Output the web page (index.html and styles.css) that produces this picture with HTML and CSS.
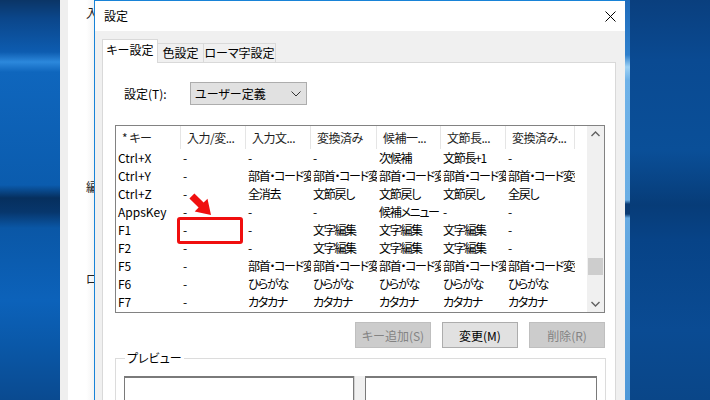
FILE: index.html
```html
<!DOCTYPE html>
<html lang="ja">
<head>
    <meta charset="UTF-8">
    <title>設定</title>
    <link rel="stylesheet" href="styles.css">
</head>
<body>
    <!-- desktop on the left -->
    <div class="desk desk-left"></div>

    <!-- window behind the dialog -->
    <div class="back-window">
        <span class="back-char ch1">入</span>
        <span class="back-char ch2">編</span>
        <span class="back-char ch3">ロ</span>
    </div>

    <!-- Settings dialog -->
    <div class="dialog">
        <div class="title-bar">
            <span class="title">設定</span>
            <svg class="close-x" width="11" height="11" viewBox="0 0 11 11">
                <path d="M0.5 0.5 L10.5 10.5 M10.5 0.5 L0.5 10.5" stroke="#000" stroke-width="1" fill="none"/>
            </svg>
        </div>

        <div class="dialog-body">
            <div class="tabs">
                <div class="tab active">キー設定</div>
                <div class="tab tab-color">色設定</div>
                <div class="tab tab-roma">ローマ字設定</div>
            </div>

            <div class="panel">
                <div class="setting-row">
                    <span class="setting-label">設定(T):</span>
                    <div class="combo">
                        <span>ユーザー定義</span>
                        <svg class="combo-arrow" width="10" height="6" viewBox="0 0 10 6">
                            <path d="M0.5 0.5 L5 5 L9.5 0.5" stroke="#333" stroke-width="1" fill="none"/>
                        </svg>
                    </div>
                </div>

                <div class="list">
                    <div class="list-main">
                        <div class="list-row list-head">
                            <div class="cell">* キー</div>
                            <div class="cell">入力/変...</div>
                            <div class="cell">入力文...</div>
                            <div class="cell">変換済み</div>
                            <div class="cell">候補一...</div>
                            <div class="cell">文節長...</div>
                            <div class="cell">変換済み...</div>
                            <div class="cell filler"></div>
                        </div>
                        <div id="rows"></div>
                    </div>
                    <div class="scrollbar">
                        <svg class="sb-arrow" width="17" height="17" viewBox="0 0 17 17">
                            <path d="M4.5 10 L8.5 6 L12.5 10" stroke="#606060" stroke-width="1.4" fill="none"/>
                        </svg>
                        <div class="sb-track">
                            <div class="sb-thumb"></div>
                        </div>
                        <svg class="sb-arrow" width="17" height="17" viewBox="0 0 17 17">
                            <path d="M4.5 7 L8.5 11 L12.5 7" stroke="#606060" stroke-width="1.4" fill="none"/>
                        </svg>
                    </div>
                </div>

                <div class="button-row">
                    <button class="win-btn" disabled>キー追加(S)</button>
                    <button class="win-btn">変更(M)</button>
                    <button class="win-btn" disabled>削除(R)</button>
                </div>

                <fieldset class="preview">
                    <legend>プレビュー</legend>
                    <div class="preview-boxes">
                        <div class="preview-box"></div>
                        <div class="splitter"></div>
                        <div class="preview-box wide"></div>
                    </div>
                </fieldset>
            </div>
        </div>
    </div>

    <!-- desktop on the right -->
    <div class="desk desk-right">
        <div class="light-edge"></div>
    </div>

    <!-- annotation -->
    <svg class="mark-arrow" width="30" height="30" viewBox="185 188 30 30">
        <polygon points="194.4,193.4 203.6,202.6 207.5,198.7 211,215 194.7,211.5 198.6,207.6 189.4,198.4" fill="#f00f0f"/>
    </svg>
    <div class="mark-box"></div>

    <script>
        const keyRows = [
            ['Ctrl+X', '-', '-', '-', '次候補', '文節長+1', '-'],
            ['Ctrl+Y', '-', '部首・コード変換', '部首・コード変換', '部首・コード変換', '部首・コード変換', '部首・コード変換'],
            ['Ctrl+Z', '-', '全消去', '文節戻し', '文節戻し', '文節戻し', '全戻し'],
            ['AppsKey', '-', '-', '-', '候補メニュー', '-', '-'],
            ['F1', '-', '-', '文字編集', '文字編集', '文字編集', '-'],
            ['F2', '-', '-', '文字編集', '文字編集', '文字編集', '-'],
            ['F5', '-', '部首・コード変換', '部首・コード変換', '部首・コード変換', '部首・コード変換', '部首・コード変換'],
            ['F6', '-', 'ひらがな', 'ひらがな', 'ひらがな', 'ひらがな', 'ひらがな'],
            ['F7', '-', 'カタカナ', 'カタカナ', 'カタカナ', 'カタカナ', 'カタカナ']
        ];

        const rowsEl = document.getElementById('rows');
        keyRows.forEach(function(r) {
            const row = document.createElement('div');
            row.className = 'list-row';
            r.forEach(function(text) {
                const c = document.createElement('div');
                c.className = 'cell';
                c.textContent = text;
                row.appendChild(c);
            });
            const f = document.createElement('div');
            f.className = 'cell filler';
            row.appendChild(f);
            rowsEl.appendChild(row);
        });
    </script>
</body>
</html>
```

FILE: styles.css
```css
* {
    margin: 0;
    padding: 0;
    box-sizing: border-box;
}

body {
    width: 710px;
    height: 400px;
    overflow: hidden;
    display: flex;
    position: relative;
    font-family: "Noto Sans CJK JP", "Noto Sans", sans-serif;
    font-feature-settings: "palt";
    font-size: 12px;
    color: #000;
    background: #0a4a90;
}

/* Desktop */
.desk {
    height: 400px;
    flex-shrink: 0;
}

.desk-left {
    width: 60px;
    background: linear-gradient(to bottom,
        #0b3566 0px, #0b468a 18px, #0d5cb0 52px, #2c88dc 62px, #0f66bd 72px,
        #0b5cae 185px, #062f5e 198px, #07366c 212px, #0a57a6 228px,
        #0c62ba 300px, #0a58a8 345px, #0a4a90 400px);
}

.desk-right {
    flex: 1;
    display: flex;
    background: linear-gradient(to bottom,
        #0a3f7e 0px, #0a4a92 60px, #0a4f98 150px, #073c78 205px,
        #074387 240px, #0a4b93 330px, #0a4688 400px);
}

.light-edge {
    width: 5px;
    background: linear-gradient(to bottom,
        #1f6cbc 0px, #2f80cc 55px, #9fd2f5 67px, #6fb2e8 80px, #6aaee4 200px,
        #0b3b73 204px, #0b3b73 214px, #66aae2 218px, #4e98d8 400px);
}

/* Window behind */
.back-window {
    width: 34px;
    height: 400px;
    flex-shrink: 0;
    border-left: 8px solid #efefef;
    background: linear-gradient(to right, #ffffff 70%, #f4f4f4);
    overflow: hidden;
    display: flex;
    flex-direction: column;
    padding-left: 18px;
}

.back-char {
    display: block;
    line-height: 14px;
    color: #222;
}

.ch1 { margin-top: 6px; }
.ch2 { margin-top: 160px; }
.ch3 { margin-top: 78px; }

/* Dialog */
.dialog {
    width: 531px;
    height: 400px;
    flex-shrink: 0;
    border-left: 1px solid #1883d7;
    border-top: 1px solid #1883d7;
    background: #f0f0f0;
    display: flex;
    flex-direction: column;
    overflow: hidden;
}

.title-bar {
    height: 30px;
    flex-shrink: 0;
    background: #fff;
    display: flex;
    align-items: center;
    justify-content: space-between;
    padding: 0 9px 0 9px;
}

.title {
    line-height: 14px;
}

.close-x {
    display: block;
}

.dialog-body {
    flex: 1;
    min-height: 0;
    padding: 8px 9px 0 7px;
    display: flex;
    flex-direction: column;
}

/* Tabs */
.tabs {
    display: flex;
    align-items: flex-end;
    height: 23px;
    flex-shrink: 0;
}

.tab {
    height: 19px;
    border: 1px solid #d9d9d9;
    border-bottom: none;
    background: #f0f0f0;
    text-align: center;
    line-height: 17px;
    margin-left: -1px;
}

.tab.active {
    height: 24px;
    width: 56px;
    margin-left: 0;
    margin-bottom: -1px;
    background: #fff;
    position: relative;
    z-index: 1;
    line-height: 20px;
}

.tab-color { width: 47px; }
.tab-roma { width: 73px; }

.panel {
    flex: 1;
    min-height: 0;
    background: #fff;
    border: 1px solid #d9d9d9;
    border-bottom: none;
    padding-left: 12px;
}

.setting-row {
    display: flex;
    align-items: center;
    margin-top: 19px;
}

.setting-label {
    width: 75px;
    padding-left: 9px;
}

.combo {
    width: 117px;
    height: 23px;
    background: #e1e1e1;
    border: 1px solid #adadad;
    display: flex;
    align-items: center;
    justify-content: space-between;
    padding: 0 5px 0 4px;
}

.combo-arrow {
    display: block;
}

/* List view */
.list {
    width: 490px;
    height: 188px;
    margin-top: 20px;
    border: 1px solid #828282;
    display: flex;
}

.list-main {
    flex: 1;
    overflow: hidden;
}

.list-row {
    display: grid;
    grid-template-columns: 65px 65px 65px 66px 64px 65px 69px 1fr;
    height: 18px;
    line-height: 18px;
}

.list-head {
    height: 23px;
    line-height: 23px;
    color: #1e1e1e;
}

.cell {
    white-space: nowrap;
    overflow: hidden;
    padding-left: 2px;
    letter-spacing: -1.3px;
}

.cell:first-child {
    letter-spacing: 0;
}

.list-head .cell {
    padding-left: 6px;
    letter-spacing: -0.5px;
    border-right: 1px solid #e5e5e5;
}

.list-head .cell.filler {
    border-right: none;
}

.scrollbar {
    width: 17px;
    background: #f0f0f0;
    display: flex;
    flex-direction: column;
}

.sb-arrow {
    display: block;
}

.sb-track {
    flex: 1;
    padding-top: 115px;
}

.sb-thumb {
    height: 17px;
    margin: 0 1px;
    background: #cdcdcd;
}

/* Buttons */
.button-row {
    width: 490px;
    display: flex;
    justify-content: flex-end;
    gap: 11px;
    margin-top: 9px;
}

.win-btn {
    width: 76px;
    height: 26px;
    font-family: inherit;
    font-feature-settings: "palt";
    font-size: 12px;
    background: #e1e1e1;
    border: 1px solid #adadad;
    color: #000;
}

.win-btn:disabled {
    background: #cccccc;
    border-color: #bfbfbf;
    color: #838383;
}

/* Preview group */
.preview {
    width: 491px;
    margin-top: 3px;
    border: 1px solid #dcdcdc;
    padding: 11px 8px 0 8px;
    height: 80px;
}

.preview legend {
    margin-left: 1px;
    padding: 0 2px;
    line-height: 14px;
}

.preview-boxes {
    display: flex;
}

.preview-box {
    width: 230px;
    height: 60px;
    border: 1px solid #7a7a7a;
    border-top-width: 2px;
    background: #fff;
}

.preview-box.wide {
    width: 232px;
}

.splitter {
    width: 11px;
    background: #f0f0f0;
    border-left: 1px solid #d0d0d0;
}

/* Annotation */
.mark-arrow {
    position: absolute;
    left: 185px;
    top: 188px;
}

.mark-box {
    position: absolute;
    left: 177px;
    top: 217px;
    width: 66px;
    height: 27px;
    border: 3px solid #f00f0f;
    border-radius: 3px;
}
```
